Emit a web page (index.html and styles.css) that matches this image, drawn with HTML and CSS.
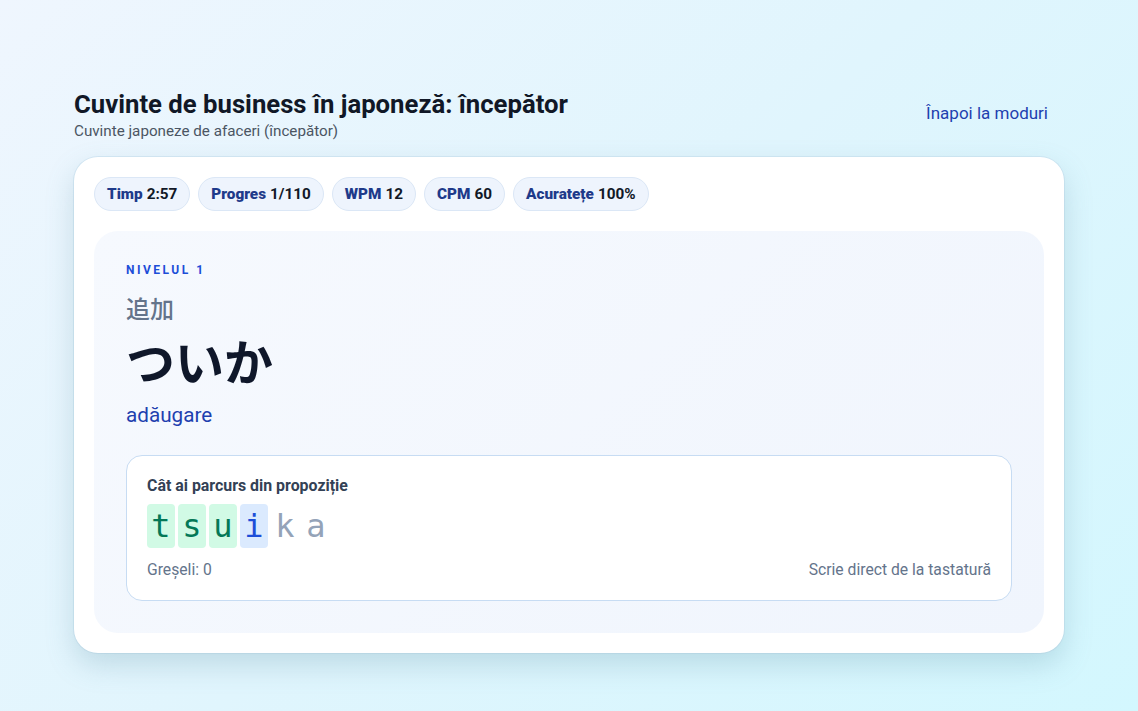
FILE: index.html
```html
<!DOCTYPE html>
<html lang="ro">
<head>
<meta charset="utf-8">
<title>Cuvinte de business în japoneză: începător</title>
<link rel="stylesheet" href="styles.css">
</head>
<body>
<main class="page">
  <header class="head">
    <div class="titles">
      <h1 class="title">Cuvinte de business în japoneză: începător</h1>
      <p class="subtitle">Cuvinte japoneze de afaceri (începător)</p>
    </div>
    <a class="back" href="#">Înapoi la moduri</a>
  </header>
  <section class="card">
    <div class="stats">
      <span class="chip"><b>Timp</b> 2:57</span>
      <span class="chip"><b>Progres</b> 1/110</span>
      <span class="chip"><b>WPM</b> 12</span>
      <span class="chip"><b>CPM</b> 60</span>
      <span class="chip"><b>Acuratețe</b> 100%</span>
    </div>
    <div class="panel">
      <div class="level">NIVELUL 1</div>
      <div class="kanji">追加</div>
      <div class="kana">ついか</div>
      <div class="meaning">adăugare</div>
      <div class="typing">
        <div class="typing-label">Cât ai parcurs din propoziție</div>
        <div class="letters">
          <span class="ch done">t</span><span class="ch done">s</span><span class="ch done">u</span><span class="ch cur">i</span><span class="ch">k</span><span class="ch">a</span>
        </div>
        <div class="typing-foot">
          <span>Greșeli: 0</span>
          <span>Scrie direct de la tastatură</span>
        </div>
      </div>
    </div>
  </section>
</main>
</body>
</html>
```
FILE: styles.css
```css
html, body { margin: 0; padding: 0; }
body {
  min-height: 711px;
  background: linear-gradient(135deg, #eff6fe 0%, #e0f5fd 50%, #d3f7fe 100%);
  font-family: Roboto, "Noto Sans CJK JP", sans-serif;
  color: #0f172a;
}
.page {
  width: 990px;
  margin: 0 auto;
  padding-top: 86px;
}
.head {
  display: flex;
  justify-content: space-between;
  align-items: center;
}
.title {
  margin: 0;
  font-size: 25.7px;
  line-height: 36px;
  font-weight: 700;
  color: #111827;
}
.subtitle {
  margin: 0;
  font-size: 15.2px;
  line-height: 18px;
  color: #4b5563;
}
.back {
  color: #1e40af;
  text-decoration: none;
  font-size: 17px;
  padding: 8px 16px;
}
.card {
  margin-top: 17px;
  background: #fff;
  border-radius: 24px;
  padding: 20px;
  box-shadow: 0 12px 28px rgba(100, 150, 170, 0.28), 0 0 0 1px rgba(200, 225, 240, 0.6);
}
.stats {
  display: flex;
  gap: 8px;
}
.chip {
  display: inline-flex;
  align-items: center;
  gap: 4px;
  height: 32px;
  padding: 0 12px;
  border-radius: 999px;
  background: #eef4fd;
  border: 1px solid #dbe7f6;
  font-size: 15.3px;
  font-weight: 700;
  color: #111827;
}
.chip b { color: #1e3a8a; }
.panel {
  margin-top: 20px;
  border-radius: 24px;
  background: linear-gradient(135deg, #f6f9fe 0%, #f0f5fd 100%);
  padding: 32px;
}
.level {
  font-size: 12px;
  font-weight: 700;
  letter-spacing: 2.5px;
  color: #1d4ed8;
  line-height: 14px;
}
.kanji {
  margin-top: 16px;
  font-family: "Noto Sans CJK JP", sans-serif;
  font-size: 24px;
  line-height: 30px;
  color: #64748b;
  font-weight: 500;
}
.kana {
  margin-top: 6px;
  font-family: "Noto Sans CJK JP", sans-serif;
  font-size: 49px;
  line-height: 62px;
  font-weight: 700;
  color: #0f172a;
}
.meaning {
  margin-top: 11px;
  font-size: 20.7px;
  line-height: 26px;
  color: #1e40af;
}
.typing {
  margin-top: 27px;
  background: #fff;
  border: 1px solid #c7dcf3;
  border-radius: 16px;
  padding: 20px 20px 20px;
}
.typing-label {
  font-size: 15.9px;
  font-weight: 700;
  color: #334155;
  line-height: 20px;
}
.letters {
  margin-top: 8px;
  display: flex;
  gap: 3px;
  font-family: "DejaVu Sans Mono", monospace;
  font-size: 32px;
}
.ch {
  width: 28px;
  height: 44px;
  line-height: 44px;
  text-align: center;
  border-radius: 4px;
  color: #94a3b8;
}
.ch.done { background: #d1fae5; color: #047857; }
.ch.cur { background: #dbeafe; color: #1d4ed8; }
.typing-foot {
  margin-top: 12px;
  display: flex;
  justify-content: space-between;
  font-size: 15.7px;
  color: #64748b;
  line-height: 20px;
}
```
